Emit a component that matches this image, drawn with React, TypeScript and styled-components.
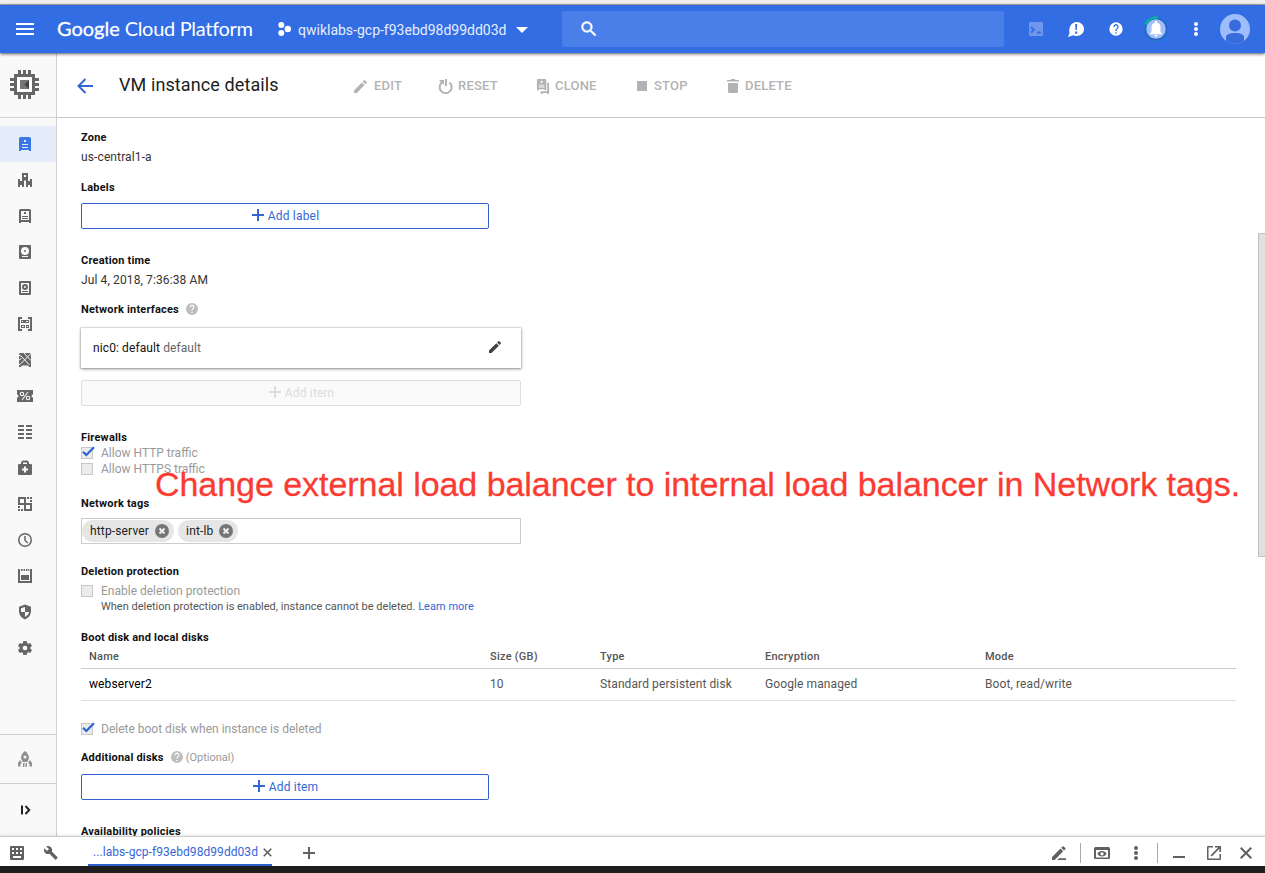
import React from "react";
import styled, { createGlobalStyle, css } from "styled-components";

const Global = createGlobalStyle`
  * { box-sizing: border-box; }
  html, body { margin: 0; padding: 0; overflow: hidden; }
  body { font-family: Roboto, "Liberation Sans", sans-serif; font-size: 12px; color: #212121; background: #fff; }
  svg { display: block; flex: none; }
`;

const Page = styled.div`
  position: relative;
  display: flex;
  flex-direction: column;
  width: 1265px;
  height: 873px;
  overflow: hidden;
`;
const WindowEdge = styled.div`
  height: 5px;
  flex: none;
  background: #eee;
  border-bottom: 1px solid #a9a9a9;
`;
const Header = styled.header`
  height: 48px;
  flex: none;
  display: flex;
  align-items: center;
  background: #326de4;
  color: #fff;
  padding-left: 16px;
  box-shadow: 0 1px 3px rgba(0, 0, 0, 0.65);
  z-index: 3;
`;
const Brand = styled.div`
  width: 220px;
  margin: 0 0 2px 23px;
  font-family: Lato, sans-serif;
  font-size: 20px;
  line-height: 24px;
  white-space: nowrap;
  letter-spacing: -0.3px;
  b { font-weight: 400; letter-spacing: 0; -webkit-text-stroke: 0.3px #fff; }
`;
const Project = styled.div`
  display: flex;
  align-items: center;
  width: 285px;
  font-size: 14px;
  line-height: 20px;
  color: #e6eefc;
`;
const ProjectName = styled.span`
  width: 209px;
  margin: 2px 9px 0 6px;
  white-space: nowrap;
`;
const Search = styled.div`
  width: 442px;
  height: 36px;
  border-radius: 2px;
  background: #4a7fe9;
  padding: 8px 0 0 17px;
`;
const HeaderIcons = styled.div`
  display: flex;
  align-items: center;
  margin-left: 20px;
`;
const HeaderIcon = styled.div<{ $w?: number }>`
  width: ${(p) => p.$w ?? 40}px;
  height: 48px;
  display: flex;
  align-items: center;
  justify-content: center;
`;

const Body = styled.div`
  display: flex;
  flex: 1;
  min-height: 0;
`;
const Sidebar = styled.nav`
  width: 57px;
  flex: none;
  display: flex;
  flex-direction: column;
  background: #f9f9f9;
  border-right: 1px solid #d0d0d0;
  color: #666;
`;
const Product = styled.div`
  height: 65px;
  border-bottom: 1px solid #d4d4d4;
  padding: 17px 0 0 10px;
`;
const NavList = styled.div`
  flex: 1;
  padding-top: 8px;
`;
const NavItem = styled.div<{ $active?: boolean }>`
  height: 36px;
  display: flex;
  align-items: center;
  padding-left: 16px;
  ${(p) => p.$active && css`background: #e6edfa; color: #3b78e7;`}
`;
const NavFooter = styled.div<{ $h: number }>`
  height: ${(p) => p.$h}px;
  border-top: 1px solid #d0d0d0;
  display: flex;
  align-items: center;
  padding-left: 16px;
`;

const Main = styled.main`
  flex: 1;
  min-width: 0;
  display: flex;
  flex-direction: column;
`;
const Toolbar = styled.div`
  height: 65px;
  flex: none;
  display: flex;
  align-items: center;
  border-bottom: 1px solid #c8c8c8;
  padding: 2px 0 0 20px;
`;
const Title = styled.h1`
  margin: 0 0 2px 26px;
  width: 233px;
  font-size: 18px;
  font-weight: 400;
  line-height: 24px;
  letter-spacing: 0.1px;
  white-space: nowrap;
`;
const Action = styled.div<{ $w: number; $gap?: number }>`
  width: ${(p) => p.$w}px;
  display: flex;
  align-items: center;
  gap: ${(p) => p.$gap ?? 4}px;
  color: #b3b3b3;
  font-size: 13px;
  font-weight: 500;
  line-height: 16px;
  letter-spacing: 0.2px;
`;
const Scroll = styled.div`
  flex: 1;
  min-height: 0;
  display: flex;
  overflow: hidden;
`;
const Content = styled.div`
  width: 1179px;
  padding: 11px 0 0 24px;
`;
const ScrollTrack = styled.div`
  margin-left: auto;
  width: 7px;
  padding-top: 115px;
`;
const ScrollThumb = styled.div`
  height: 324px;
  background: #e0e0e0;
  border: 1px solid #c2c2c2;
  border-right: 0;
`;
const Label = styled.div<{ $top?: number }>`
  margin-top: ${(p) => p.$top ?? 0}px;
  height: 16px;
  padding-top: 2px;
  display: flex;
  align-items: center;
  font-size: 11px;
  font-weight: 700;
  line-height: 14px;
  letter-spacing: 0.2px;
  color: #111;
  white-space: nowrap;
`;
const Optional = styled.span`
  margin-left: 3px;
  font-weight: 400;
  letter-spacing: 0;
  color: #999;
`;
const HelpSlot = styled.span`
  margin: 0 0 2px 7px;
`;
const Value = styled.div`
  margin-top: 4px;
  height: 16px;
  line-height: 16px;
  letter-spacing: 0.12px;
  color: #333;
`;
const AddButton = styled.div<{ $w: number; $top: number; $disabled?: boolean }>`
  width: ${(p) => p.$w}px;
  height: 26px;
  margin-top: ${(p) => p.$top}px;
  padding-left: 1px;
  display: flex;
  align-items: center;
  justify-content: center;
  gap: 4px;
  border: 1px solid #3060cf;
  border-radius: 2px;
  color: #3367d6;
  letter-spacing: 0.2px;
  svg { margin-bottom: 2px; }
  ${(p) => p.$disabled && css`border-color: #dedede; color: #dcdcdc; background: #fafafa;`}
`;
const NicCard = styled.div`
  width: 440px;
  height: 40px;
  margin-top: 11px;
  padding: 0 18px 0 12px;
  display: flex;
  align-items: center;
  justify-content: space-between;
  color: #111;
  box-shadow: 0 0 1px 1px rgba(0, 0, 0, 0.08), 0 1px 3px rgba(0, 0, 0, 0.42);
  letter-spacing: 0.1px;
  span { color: #666; }
  svg { color: #424242; margin-bottom: 2px; }
`;
const CheckRow = styled.div<{ $top?: number }>`
  margin-top: ${(p) => p.$top ?? 0}px;
  height: 16px;
  display: flex;
  align-items: center;
  gap: 6px;
  line-height: 16px;
  color: #999;
`;
const Hint = styled.div`
  height: 16px;
  margin: 0 0 0 20px;
  font-size: 11px;
  line-height: 16px;
  color: #555;
  a { color: #3367d6; }
`;
const Tags = styled.div`
  width: 440px;
  height: 26px;
  margin-top: 7px;
  display: flex;
  align-items: center;
  gap: 4px;
  border: 1px solid #ccc;
`;
const Tag = styled.div`
  height: 22px;
  display: flex;
  align-items: center;
  gap: 6px;
  padding: 0 5px 0 8px;
  border-radius: 11px;
  background: #e6e6e6;
  color: #222;
  letter-spacing: 0.15px;
`;
const Table = styled.div`
  width: 1155px;
`;
const Row = styled.div<{ $head?: boolean }>`
  display: grid;
  grid-template-columns: 401px 110px 165px 220px 1fr;
  align-items: center;
  height: ${(p) => (p.$head ? 24 : 32)}px;
  padding: 0 0 ${(p) => (p.$head ? 0 : 2)}px 8px;
  border-bottom: 1px solid ${(p) => (p.$head ? "#ccc" : "#e0e0e0")};
  font-size: ${(p) => (p.$head ? 11 : 12)}px;
  font-weight: ${(p) => (p.$head ? 500 : 400)};
  letter-spacing: ${(p) => (p.$head ? 0.25 : 0.1)}px;
  color: #555;
`;
const DiskName = styled.span`
  color: #000;
`;

const Note = styled.div`
  position: absolute;
  left: 155px;
  top: 464px;
  font-family: "Liberation Sans", sans-serif;
  font-size: 34px;
  line-height: 40px;
  letter-spacing: -0.05px;
  color: #fb3b32;
  -webkit-text-stroke: 0.3px #fb3b32;
  white-space: nowrap;
  z-index: 4;
`;

const Shell = styled.footer`
  height: 30px;
  flex: none;
  display: flex;
  align-items: center;
  border-top: 1px solid #ccc;
  background: #fff;
  color: #616161;
  padding: 2px 0 0 10px;
  box-shadow: 0 -1px 3px rgba(0, 0, 0, 0.1);
  z-index: 2;
`;
const ShellTab = styled.div`
  width: 184px;
  height: 27px;
  align-self: flex-end;
  margin: 0 31px 0 30px;
  padding: 1px 0 0 5px;
  display: flex;
  align-items: center;
  gap: 5px;
  border-bottom: 2px solid #3060cf;
  color: #3367d6;
  letter-spacing: 0.06px;
  white-space: nowrap;
`;
const ShellTools = styled.div`
  display: flex;
  align-items: center;
  margin-left: auto;
  padding-right: 13px;
`;
const Divider = styled.div<{ $l: number; $r: number }>`
  width: 1px;
  height: 20px;
  margin: 0 ${(p) => p.$r}px 0 ${(p) => p.$l}px;
  background: #aaa;
`;
const Gap = styled.div<{ $w: number }>`
  width: ${(p) => p.$w}px;
`;
const Bezel = styled.div`
  height: 7px;
  flex: none;
  background: #1e1e1e;
`;

type IconProps = { s?: number; box?: string; children: React.ReactNode };
const Svg = ({ s = 18, box = "0 0 18 18", children }: IconProps) => (
  <svg width={s} height={s} viewBox={box} fill="currentColor" fillRule="evenodd">
    {children}
  </svg>
);

const PENCIL = "M3 17.25V21h3.75L17.81 9.94l-3.75-3.75L3 17.25zM20.71 7.04a1 1 0 0 0 0-1.41l-2.34-2.34a1 1 0 0 0-1.41 0l-1.83 1.83 3.75 3.75 1.83-1.83z";
const HELP = "M12 2a10 10 0 1 0 0 20 10 10 0 0 0 0-20zm1 17h-2v-2h2v2zm2.07-7.75-.9.92C13.45 12.9 13 13.5 13 15h-2v-.5c0-1.1.45-2.1 1.17-2.83l1.24-1.26A2 2 0 1 0 10 9H8a4 4 0 1 1 7.07 2.25z";
const Pencil = ({ s = 18 }: { s?: number }) => <Svg s={s} box="0 0 24 24"><path d={PENCIL} /></Svg>;
const Help = ({ s = 15 }: { s?: number }) => <Svg s={s} box="0 0 24 24"><path d={HELP} /></Svg>;
const Plus = () => <Svg s={12} box="0 0 12 12"><path d="M5 0h2v5h5v2H7v5H5V7H0V5h5z" /></Svg>;

const HelpMark = () => (
  <HelpSlot>
    <svg width="12" height="12" viewBox="2 2 20 20" fill="#bdbdbd"><path d={HELP} /></svg>
  </HelpSlot>
);

const Check = ({ on }: { on?: boolean }) => (
  <svg width="14" height="14" viewBox="0 0 14 14" fill="none">
    <rect x=".5" y="1.5" width="11" height="11" fill="#ebebeb" stroke="#c8c8c8" />
    {on && <path d="M2 5.8 5.3 9 13 1.2" stroke="#2f63d5" strokeWidth="2.2" />}
  </svg>
);

const navIcons: React.ReactNode[] = [
  <path d="M4.500 2h9A1.500 1.500 0 0 1 15 3.500V16h-2v-1H5v1H3V3.500A1.500 1.500 0 0 1 4.500 2zM8 5v2h2V5zM6 9v1h6V9zm0 3v1h6v-1z" />,
  <path d="M6 2h6v6h-2v1.500H8V8H6zM8 4v2h2V4zM2 8h2v2h2V8h2v8H6v-2H4v2H2zm14 0h-2v2h-2V8h-2v8h2v-2h2v2h2z" />,
  <path d="M4.500 2h9A1.500 1.500 0 0 1 15 3.500V16h-2v-1H5v1H3V3.500A1.500 1.500 0 0 1 4.500 2zM5 4v9h8V4zm3 1h2v2H8zM6 9h6v1H6zm0 2h6v1H6z" />,
  <path d="M4 2h10a1 1 0 0 1 1 1v12a1 1 0 0 1-1 1H4a1 1 0 0 1-1-1V3a1 1 0 0 1 1-1zm5 2a4 4 0 1 0 0 8 4 4 0 0 0 0-8zm0 3a1 1 0 1 1 0 2 1 1 0 0 1 0-2zm-3 6v1h6v-1z" />,
  <path d="M4 2h10a1 1 0 0 1 1 1v12a1 1 0 0 1-1 1H4a1 1 0 0 1-1-1V3a1 1 0 0 1 1-1zm1 2v10h8V4zm4 1a3 3 0 1 1 0 6 3 3 0 0 1 0-6zm0 2a1 1 0 1 0 0 2 1 1 0 0 0 0-2zm-3 5h6v1H6z" />,
  <path d="M2 2h4v2H4v10h2v2H2zm10 0h4v14h-4v-2h2V4h-2zM5 5h3v3H5zm1 1v1h1V6zm2-1h5v3H8zm2 1v1h2V6zM5 10h4v3H5zm1 1v1h2v-1zm4-1h3v3h-3zm1 1v1h1v-1z" />,
  <>
    <path d="M4.500 2h9A1.500 1.500 0 0 1 15 3.500V16h-2l-1-1.500H6L5 16H3V3.500A1.500 1.500 0 0 1 4.500 2z" />
    <path d="M3 4.500 5 5l8.500 9M15 2.500 5.500 12 3 14M8 2l4.500 5L15 9.500M3 9l2.500-1.500" stroke="#f9f9f9" strokeWidth="1" fill="none" />
  </>,
  <>
    <path d="M1 3h16v4.500a1.500 1.500 0 0 0 0 3V15H1v-4.500a1.500 1.500 0 0 0 0-3z" />
    <g fill="none" stroke="#f9f9f9" strokeWidth="1.100">
      <circle cx="6" cy="7" r="1.700" /><circle cx="12" cy="11" r="1.700" /><path d="m12 5-6 8" />
    </g>
  </>,
  <path d="M2 2h6v2H2zm8 0h6v2h-6zM2 6h6v2H2zm8 0h6v2h-6zm-8 4h6v2H2zm8 0h6v2h-6zm-8 4h6v2H2zm8 0h6v2h-6z" />,
  <path d="M5 5V3.500L6.500 1.500h5L13 3.500V5h2a1 1 0 0 1 1 1v9a1 1 0 0 1-1 1H3a1 1 0 0 1-1-1V6a1 1 0 0 1 1-1zm2 0h4V3.500H7zm1 2.500v2H6v2h2v2h2v-2h2v-2h-2v-2z" />,
  <path d="M2 2h8v6h6v8H8v-6H2zm2 2v4h4V4zm6 6v4h4v-4zM11 2h2v2h-2zm3 0h2v2h-2zm0 3h2v2h-2zM2 11h2v2H2zm0 3h2v2H2zm3 0h2v2H5z" />,
  <path d="M9 2a7 7 0 1 0 0 14A7 7 0 0 0 9 2zm0 1.500a5.500 5.500 0 1 1 0 11 5.500 5.500 0 0 1 0-11zM8.200 5h1.500v4l2.500 2.500-1 1-3-3z" />,
  <path d="M2 2h2v12h10V2h2v14H2zm3 0h1.500v2H5zm2.500 0H9v2H7.500zm2.500 0h1.500v2H10zm2.300 0h1v2h-1zM5 8h8v5H5z" />,
  <path d="m9 1.500 6 2.300V8c0 4-2.400 7-6 8.500C5.400 15 3 12 3 8V3.800zM9 4 5 5.300V9h4v5c2.500-1.500 3.700-3 4-5H9z" />,
  <path d="m7.300 2-.4 2-1.200.7-2-.8L2 6.900l1.600 1.400v1.400L2 11.100l1.700 3 2-.8 1.200.7.4 2h3.400l.4-2 1.200-.7 2 .8 1.700-3-1.600-1.400V8.300L16 6.900l-1.700-3-2 .8L11.100 4l-.4-2zM9 6.700a2.300 2.300 0 1 1 0 4.600 2.300 2.300 0 0 1 0-4.600z" />,
];

const ProductIcon = () => (
  <svg width="29" height="29" viewBox="0 0 29 29" fill="#666">
    <path d="M8 0h3v4h2V0h3v4h2V0h3v4h4v4h4v3h-4v2h4v3h-4v2h4v3h-4v4h-4v4h-3v-4h-2v4h-3v-4h-2v4H8v-4H4v-4H0v-3h4v-2H0v-3h4v-2H0V8h4V4h4z" />
    <path d="M7 7h15v15H7z" fill="#fff" />
    <path d="M10 10h9v9h-9z" fill="#757575" />
    <path d="m19 10-4.500 4.500L19 19z" fill="#424242" />
  </svg>
);

export default function App() {
  return (
    <Page>
      <Global />
      <WindowEdge />
      <Header>
        <Svg><path d="M0 3h18v2H0zm0 5h18v2H0zm0 5h18v2H0z" /></Svg>
        <Brand><b>Google</b> Cloud Platform</Brand>
        <Project>
          <svg width="15" height="16" viewBox="0 0 15 16" fill="#fff">
            <circle cx="4.300" cy="4" r="3" /><circle cx="4.300" cy="12" r="3" /><circle cx="10.800" cy="8" r="3.200" />
          </svg>
          <ProjectName>qwiklabs-gcp-f93ebd98d99dd03d</ProjectName>
          <svg width="12" height="7" viewBox="0 0 12 7" fill="#fff"><path d="M0 1h12L6 7z" /></svg>
        </Project>
        <Search>
          <Svg s={20} box="0 0 24 24"><path stroke="#fff" strokeWidth=".6" d="M15.500 14h-.79l-.28-.27a6.500 6.500 0 1 0-.7.700l.27.280v.790l5 4.990L20.490 19zm-6 0a4.500 4.500 0 1 1 0-9 4.500 4.500 0 0 1 0 9z" /></Svg>
        </Search>
        <HeaderIcons>
          <HeaderIcon $w={24}>
            <svg width="14" height="14" viewBox="0 0 14 14"><rect width="14" height="14" rx="1" fill="#7097ec" /><path d="m2 5 3 2.700L2 10.500M8 10.500h4" stroke="#326de4" strokeWidth="1.800" fill="none" /></svg>
          </HeaderIcon>
          <Gap $w={8} />
          <HeaderIcon>
            <svg width="16" height="15" viewBox="0 0 16 15" fill="#fff"><path d="M8.500 0C12.800 0 16 3 16 7s-3.200 7-7.500 7c-1.200 0-2.300-.2-3.300-.7L0 15l1.500-4C.4 5 3.500 0 8.500 0z" /><path d="M7.200 2h2l-.3 6H7.500zm0 7.500h2v2.300h-2z" fill="#326de4" /></svg>
          </HeaderIcon>
          <HeaderIcon><Help s={16} /></HeaderIcon>
          <HeaderIcon>
            <svg width="26" height="26" viewBox="0 0 26 26" fill="none">
              <circle cx="13" cy="13" r="12" stroke="#1c80bd" strokeWidth="1" />
              <circle cx="13" cy="13" r="10.500" fill="#a3c0f6" stroke="#2b5fce" strokeWidth="1.500" />
              <path d="M2.500 8.500A11.500 11.500 0 0 1 15 1.700" stroke="#00b894" strokeWidth="2.200" />
              <path d="M12 5h2v1.500c2.500.5 3.500 2.500 3.500 5V16l1.500 1.500v.7H7v-.7L8.500 16v-4.500c0-2.500 1-4.500 3.500-5zM11.500 19h3a1.500 1.500 0 0 1-3 0z" fill="#fff" />
            </svg>
          </HeaderIcon>
          <HeaderIcon>
            <svg width="4" height="14" viewBox="0 0 4 14" fill="#fff"><circle cx="2" cy="2" r="2" /><circle cx="2" cy="7" r="2" /><circle cx="2" cy="12" r="2" /></svg>
          </HeaderIcon>
          <HeaderIcon $w={38}>
            <svg width="30" height="30" viewBox="0 0 30 30"><circle cx="15" cy="15" r="15" fill="#9dbdfb" /><circle cx="15" cy="11.500" r="6" fill="#3a6bdc" /><path d="M6 27v-4c0-2.500 4-4 9-4s9 1.500 9 4v4a15 15 0 0 1-18 0z" fill="#3a6bdc" /></svg>
          </HeaderIcon>
        </HeaderIcons>
      </Header>
      <Body>
        <Sidebar>
          <Product><ProductIcon /></Product>
          <NavList>
            {navIcons.map((icon, i) => (
              <NavItem key={i} $active={i === 0}><Svg>{icon}</Svg></NavItem>
            ))}
          </NavList>
          <NavFooter $h={49}>
            <Svg><path fill="#8f8f8f" d="M9 1C6.500 3 5 5 5 8l1.500 4h5L13 8c0-3-1.500-5-4-7zm0 4.500a1.500 1.500 0 1 1 0 3 1.500 1.500 0 0 1 0-3zM4 10l-2 3v3.500h2.500V14L6 13zM14 10l2 3v3.500h-2.500V14L12 13zM7 13h1.500v4H7zm2.500 0H11v4H9.500z" /></Svg>
          </NavFooter>
          <NavFooter $h={53}>
            <svg width="18" height="18" viewBox="0 0 18 18" stroke="#222" strokeWidth="2" fill="none"><path d="M6 4.500v9M9.500 5l3.700 4-3.700 4" /></svg>
          </NavFooter>
        </Sidebar>
        <Main>
          <Toolbar>
            <svg width="16" height="16" viewBox="0 0 16 16" fill="none" stroke="#3367d6" strokeWidth="2"><path d="M16 8H1.500M8.500 1 1.500 8l7 7" /></svg>
            <Title>VM instance details</Title>
            <Action $w={86} $gap={5}><Pencil s={17} />EDIT</Action>
            <Action $w={98} $gap={5}><Svg s={15} box="0 0 15 15"><path d="M7 0h2v7H7zM1 1h5v5L4.300 4.500a5 5 0 1 0 6.500-.2l1.300-1.600A7 7 0 1 1 2.800 3z" /></Svg>RESET</Action>
            <Action $w={101} $gap={4}><Svg s={15} box="0 0 14 16"><path d="M1.500 0h7A1.500 1.500 0 0 1 10 1.500V12H8v-1H2v1H0V1.500A1.500 1.500 0 0 1 1.500 0zM4 2v2h2V2zM2 6v1h6V6zm0 2v1h6V8zM11 4h2v12h-2v-1H6v1H4v-3h7z" /></Svg>CLONE</Action>
            <Action $w={89} $gap={7}><Svg s={10} box="0 0 10 10"><path d="M0 0h10v10H0z" /></Svg>STOP</Action>
            <Action $w={80} $gap={5}><Svg s={14} box="0 0 12 14"><path d="M0 1h3.500l1-1h3l1 1H12v1.500H0zM1 4h10v8.500a1.500 1.500 0 0 1-1.500 1.500h-7A1.500 1.500 0 0 1 1 12.500z" /></Svg>DELETE</Action>
          </Toolbar>
          <Scroll>
            <Content>
              <Label>Zone</Label>
              <Value>us-central1-a</Value>
              <Label $top={14}>Labels</Label>
              <AddButton $w={408} $top={8}><Plus />Add label</AddButton>
              <Label $top={23}>Creation time</Label>
              <Value>Jul 4, 2018, 7:36:38 AM</Value>
              <Label $top={13}>Network interfaces<HelpMark /></Label>
              <NicCard>
                <div>nic0: default <span>default</span></div>
                <Pencil s={16} />
              </NicCard>
              <AddButton $w={440} $top={12} $disabled><Plus />Add item</AddButton>
              <Label $top={23}>Firewalls</Label>
              <CheckRow><Check on />Allow HTTP traffic</CheckRow>
              <CheckRow><Check />Allow HTTPS traffic</CheckRow>
              <Label $top={18}>Network tags</Label>
              <Tags>
                {["http-server", "int-lb"].map((t) => (
                  <Tag key={t}>
                    {t}
                    <svg width="14" height="14" viewBox="0 0 14 14"><circle cx="7" cy="7" r="7" fill="#757575" /><path d="m4.500 4.500 5 5m0-5-5 5" stroke="#eee" strokeWidth="2" /></svg>
                  </Tag>
                ))}
              </Tags>
              <Label $top={19}>Deletion protection</Label>
              <CheckRow $top={4}><Check />Enable deletion protection</CheckRow>
              <Hint>When deletion protection is enabled, instance cannot be deleted. <a>Learn more</a></Hint>
              <Label $top={14}>Boot disk and local disks</Label>
              <Table>
                <Row $head><span>Name</span><span>Size (GB)</span><span>Type</span><span>Encryption</span><span>Mode</span></Row>
                <Row><DiskName>webserver2</DiskName><span>10</span><span>Standard persistent disk</span><span>Google managed</span><span>Boot, read/write</span></Row>
              </Table>
              <CheckRow $top={20}><Check on />Delete boot disk when instance is deleted</CheckRow>
              <Label $top={12}>Additional disks<HelpMark /><Optional>(Optional)</Optional></Label>
              <AddButton $w={408} $top={9}><Plus />Add item</AddButton>
              <Label $top={23}>Availability policies</Label>
            </Content>
            <ScrollTrack><ScrollThumb /></ScrollTrack>
          </Scroll>
        </Main>
      </Body>
      <Shell>
        <svg width="14" height="14" viewBox="0 0 14 14" fill="#616161" fillRule="evenodd"><path d="M1 0h12a1 1 0 0 1 1 1v12a1 1 0 0 1-1 1H1a1 1 0 0 1-1-1V1a1 1 0 0 1 1-1zm1 2v2h2V2zm4 0v2h2V2zm4 0v2h2V2zM2 6v2h2V6zm4 0v2h2V6zm4 0v2h2V6zm-7 4v2h8v-2z" /></svg>
        <Gap $w={20} />
        <Svg s={14} box="1 1 22.500 22.500"><path d="m22.700 19-9.100-9.100c.9-2.300.4-5-1.500-6.900-2-2-5-2.400-7.400-1.300L9 6 6 9 1.600 4.700C.4 7.100.9 10.100 2.900 12.100c1.900 1.900 4.600 2.400 6.900 1.500l9.100 9.100c.4.400 1 .4 1.400 0l2.300-2.300c.5-.4.5-1.100.1-1.400z" /></Svg>
        <ShellTab>
          ...labs-gcp-f93ebd98d99dd03d
          <svg width="9" height="9" viewBox="0 0 9 9" stroke="#555" strokeWidth="1.400"><path d="m.7.7 7.600 7.600m0-7.600L.7 8.300" /></svg>
        </ShellTab>
        <Svg s={12} box="0 0 12 12"><path d="M5 0h2v5h5v2H7v5H5V7H0V5h5z" /></Svg>
        <ShellTools>
          <Svg s={14} box="0 0 14 14"><path d="M0 11 8.500 2.500l2.700 2.700L2.700 14H0zM9.300 1.700l1.200-1.200a.8.8 0 0 1 1.200 0l1.600 1.600a.8.8 0 0 1 0 1.200L12 4.500zM7 12.300h7V14H5.300z" /></Svg>
          <Divider $l={14} $r={13} />
          <Svg s={16} box="0 0 16 16"><path d="M1.500 2h13A1.500 1.500 0 0 1 16 3.500v9a1.500 1.500 0 0 1-1.500 1.500h-13A1.500 1.500 0 0 1 0 12.500v-9A1.500 1.500 0 0 1 1.500 2zM2 5v7.500h12V5zm6 1c2.200 0 3.700 1 4.500 2.800C11.700 10.500 10.200 11.500 8 11.500s-3.700-1-4.500-2.700C4.300 7 5.800 6 8 6zm0 1.200a1.600 1.600 0 1 0 0 3.200 1.600 1.600 0 0 0 0-3.200z" /></Svg>
          <Gap $w={24} />
          <svg width="4" height="14" viewBox="0 0 4 14" fill="#616161"><circle cx="2" cy="2" r="2" /><circle cx="2" cy="7" r="2" /><circle cx="2" cy="12" r="2" /></svg>
          <Divider $l={19} $r={15} />
          <svg width="12" height="14" viewBox="0 0 12 14" fill="#616161"><path d="M0 10h12v2H0z" /></svg>
          <Gap $w={22} />
          <Svg s={14} box="0 0 14 14"><path d="M1 0h5v1.500H1.500v11h11V8H14v5a1 1 0 0 1-1 1H1a1 1 0 0 1-1-1V1a1 1 0 0 1 1-1zm7 0h6v6h-1.600V2.800l-7.600 7.600-1.200-1.200 7.600-7.600H8z" /></Svg>
          <Gap $w={19} />
          <svg width="12" height="12" viewBox="0 0 12 12" stroke="#616161" strokeWidth="2"><path d="m.7.7 10.600 10.600m0-10.600L.7 11.300" /></svg>
        </ShellTools>
      </Shell>
      <Bezel />
      <Note>Change external load balancer to internal load balancer in Network tags.</Note>
    </Page>
  );
}
